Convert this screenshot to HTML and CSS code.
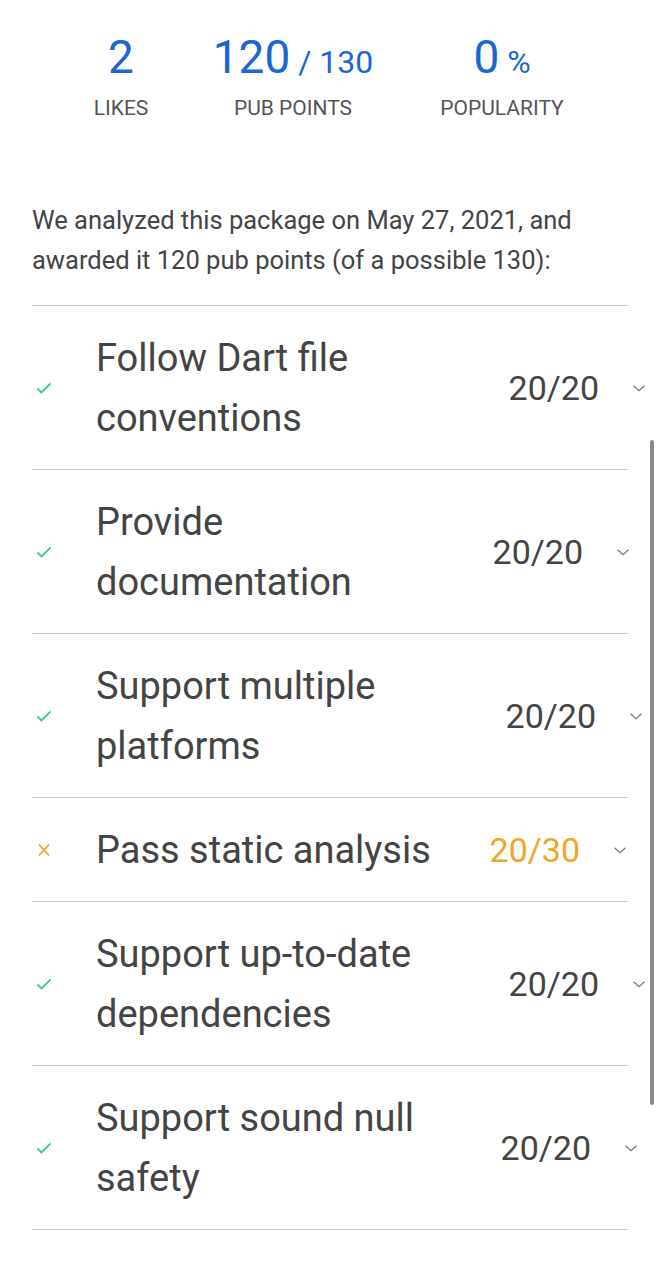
FILE: index.html
```html
<!DOCTYPE html>
<html lang="en">
<head>
    <meta charset="UTF-8">
    <meta name="viewport" content="width=device-width, initial-scale=1.0">
    <title>Scores</title>
    <link rel="stylesheet" href="styles.css">
</head>
<body>
    <div class="page">
        <div class="stats">
            <div class="stat stat-likes">
                <div class="stat-value">2</div>
                <div class="stat-label">LIKES</div>
            </div>
            <div class="stat stat-points">
                <div class="stat-value">120<span class="stat-max"> / 130</span></div>
                <div class="stat-label">PUB POINTS</div>
            </div>
            <div class="stat stat-pop">
                <div class="stat-value">0<span class="stat-max"> %</span></div>
                <div class="stat-label">POPULARITY</div>
            </div>
        </div>

        <p class="summary">We analyzed this package on May 27, 2021, and awarded it 120 pub points (of a possible 130):</p>

        <div class="sections">
            <div class="section">
                <svg class="icon ok" viewBox="0 0 16 12"><path d="M1.5 6.5 L5.5 10.5 L14.5 1.5" /></svg>
                <div class="title">Follow Dart file conventions</div>
                <div class="result">
                    <span class="score">20/20</span>
                    <svg class="chevron" viewBox="0 0 12 7"><path d="M0.5 0.8 L6 5.8 L11.5 0.8" /></svg>
                </div>
            </div>
            <div class="section">
                <svg class="icon ok" viewBox="0 0 16 12"><path d="M1.5 6.5 L5.5 10.5 L14.5 1.5" /></svg>
                <div class="title">Provide documentation</div>
                <div class="result">
                    <span class="score">20/20</span>
                    <svg class="chevron" viewBox="0 0 12 7"><path d="M0.5 0.8 L6 5.8 L11.5 0.8" /></svg>
                </div>
            </div>
            <div class="section">
                <svg class="icon ok" viewBox="0 0 16 12"><path d="M1.5 6.5 L5.5 10.5 L14.5 1.5" /></svg>
                <div class="title">Support multiple platforms</div>
                <div class="result">
                    <span class="score">20/20</span>
                    <svg class="chevron" viewBox="0 0 12 7"><path d="M0.5 0.8 L6 5.8 L11.5 0.8" /></svg>
                </div>
            </div>
            <div class="section">
                <svg class="icon fail" viewBox="0 0 16 12"><path d="M3 0.5 L13 11.5 M13 0.5 L3 11.5" /></svg>
                <div class="title">Pass static analysis</div>
                <div class="result">
                    <span class="score partial">20/30</span>
                    <svg class="chevron" viewBox="0 0 12 7"><path d="M0.5 0.8 L6 5.8 L11.5 0.8" /></svg>
                </div>
            </div>
            <div class="section">
                <svg class="icon ok" viewBox="0 0 16 12"><path d="M1.5 6.5 L5.5 10.5 L14.5 1.5" /></svg>
                <div class="title">Support up-to-date dependencies</div>
                <div class="result">
                    <span class="score">20/20</span>
                    <svg class="chevron" viewBox="0 0 12 7"><path d="M0.5 0.8 L6 5.8 L11.5 0.8" /></svg>
                </div>
            </div>
            <div class="section">
                <svg class="icon ok" viewBox="0 0 16 12"><path d="M1.5 6.5 L5.5 10.5 L14.5 1.5" /></svg>
                <div class="title">Support sound null safety</div>
                <div class="result">
                    <span class="score">20/20</span>
                    <svg class="chevron" viewBox="0 0 12 7"><path d="M0.5 0.8 L6 5.8 L11.5 0.8" /></svg>
                </div>
            </div>
        </div>
    </div>
    <div class="scrollbar"></div>
</body>
</html>
```

FILE: styles.css
```css
body {
    margin: 0;
    background-color: #fff;
    font-family: Roboto, "Liberation Sans", sans-serif;
    color: #444;
    overflow-x: hidden;
}
.page {
    padding: 0 32px;
}

/* top numbers */
.stats {
    display: flex;
    padding-top: 28px;
}
.stat {
    display: flex;
    flex-direction: column;
    align-items: center;
}
.stat-likes {
    width: 178px;
}
.stat-points {
    width: 166px;
}
.stat-pop {
    width: 252px;
}
.stat-value {
    font-size: 46px;
    line-height: 58px;
    color: #1a66d2;
    white-space: nowrap;
}
.stat-max {
    font-size: 32px;
    line-height: 1;
}
.stat-label {
    margin-top: 8px;
    font-size: 21px;
    line-height: 28px;
    color: #555;
}

.summary {
    margin: 78px 0 25px;
    font-size: 25.5px;
    line-height: 40px;
    color: #444;
}

/* report sections */
.sections {
    border-top: 1px solid #c8c8c8;
    width: 596px;
}
.section {
    display: flex;
    align-items: center;
    padding: 22px 0 21px;
    border-bottom: 1px solid #c8c8c8;
}
.icon {
    width: 16px;
    height: 12px;
    margin: 0 44px 0 4px;
    flex-shrink: 0;
    fill: none;
    stroke-width: 1.8;
}
.icon.ok {
    stroke: #3fc79b;
}
.icon.fail {
    stroke: #f3a52a;
}
.title {
    flex: 0 0 370px;
    font-size: 38px;
    line-height: 60px;
    color: #444;
}
.result {
    margin-left: auto;
    display: flex;
    align-items: center;
}
.score {
    font-size: 34px;
    color: #444;
}
.score.partial {
    color: #f3a527;
}
.chevron {
    width: 12px;
    height: 7px;
    margin-left: 34px;
    fill: none;
    stroke: #777;
    stroke-width: 1.2;
}

/* the score column is not lined up in every row */
.section:nth-child(1) .result { margin-right: -17px; }
.section:nth-child(2) .result { margin-right: -1px; }
.section:nth-child(3) .result { margin-right: -14px; }
.section:nth-child(4) .result { margin-right: 2px; }
.section:nth-child(5) .result { margin-right: -17px; }
.section:nth-child(6) .result { margin-right: -9px; }

.scrollbar {
    position: absolute;
    top: 440px;
    left: 650px;
    width: 4px;
    height: 665px;
    border-radius: 2px;
    background-color: #8a8a8a;
}
```
